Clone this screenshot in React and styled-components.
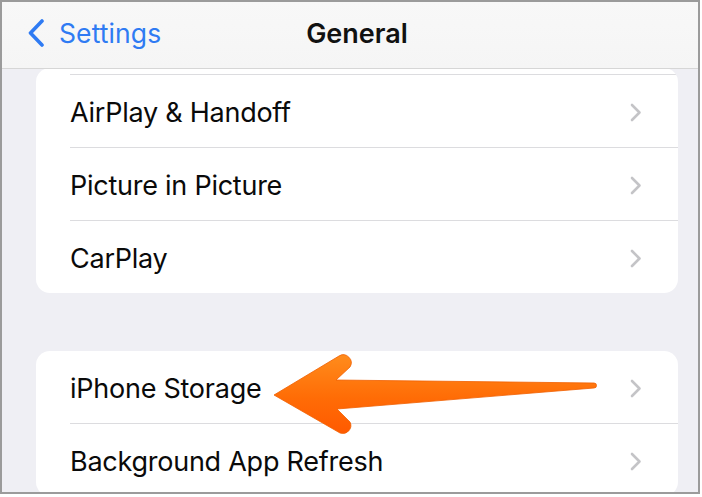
import React from 'react';
import styled, { createGlobalStyle } from 'styled-components';

const GlobalStyle = createGlobalStyle`
  html, body {
    margin: 0;
    padding: 0;
    background: #ffffff;
  }
  body {
    font-family: Inter, "Noto Sans", "Liberation Sans", sans-serif;
    -webkit-font-smoothing: antialiased;
  }
`;

const Frame = styled.div`
  position: relative;
  box-sizing: border-box;
  width: 700px;
  height: 494px;
  border: 2px solid #9b9b9b;
  background: #efeff4;
  overflow: hidden;
  display: flex;
  flex-direction: column;
`;

const NavBar = styled.header`
  position: relative;
  z-index: 2;
  flex: 0 0 auto;
  height: 67px;
  box-sizing: border-box;
  padding-bottom: 4px;
  display: grid;
  grid-template-columns: 1fr auto 1fr;
  align-items: center;
  background: linear-gradient(#f8f8f8, #f5f5f5);
  border-bottom: 1px solid #d6d6d6;
`;

const BackButton = styled.div`
  display: flex;
  align-items: center;
  gap: 14px;
  padding-left: 25px;
  color: #2f7bf3;
  font-size: 26.5px;
  letter-spacing: 0.1px;
`;

const Title = styled.h1`
  margin: 0 0 0 14px;
  font-size: 27px;
  font-weight: 600;
  color: #111;
`;

const Content = styled.main`
  flex: 1 1 auto;
  overflow: hidden;
  padding: 0 20px 0 34px;
`;

const Card = styled.section`
  margin-top: ${p => p.$offset || 0}px;
  background: #fff;
  border-radius: 14px;
  overflow: hidden;
`;

/* the bottom sliver of the row scrolled up under the nav bar */
const Peek = styled.div`
  height: 6px;
`;

const Row = styled.div`
  padding-left: 34px;
`;

const RowInner = styled.div`
  box-sizing: border-box;
  height: ${p => (p.$first ? 72 : 73)}px;
  padding: 3px 36px 0 0;
  display: flex;
  align-items: center;
  justify-content: space-between;
  border-top: ${p => (p.$first ? 'none' : '1px solid #dcdcdf')};
`;

const Label = styled.span`
  font-size: 27px;
  color: #0a0a0a;
  letter-spacing: -0.25px;
`;

const ArrowLayer = styled.svg`
  position: absolute;
  left: -2px;
  top: -2px;
  z-index: 3;
  pointer-events: none;
`;

const BackChevron = () => (
  <svg width="18" height="28" viewBox="0 0 18 28">
    <path d="M15 2 L3.5 14 L15 26" fill="none" stroke="#2f7bf3" strokeWidth="3.6" strokeLinecap="round" strokeLinejoin="round" />
  </svg>
);

const Chevron = () => (
  <svg width="12" height="19" viewBox="0 0 12 19">
    <path d="M2 2 L9.5 9.5 L2 17" fill="none" stroke="#c4c4c7" strokeWidth="2.6" strokeLinecap="round" strokeLinejoin="round" />
  </svg>
);

const SettingsRow = ({ label, first }) => (
  <Row>
    <RowInner $first={first}>
      <Label>{label}</Label>
      <Chevron />
    </RowInner>
  </Row>
);

export default function App() {
  return (
    <>
      <GlobalStyle />
      <Frame>
        <NavBar>
          <BackButton>
            <BackChevron />
            <span>Settings</span>
          </BackButton>
          <Title>General</Title>
          <div />
        </NavBar>
        <Content>
          <Card $offset={-1}>
            <Peek />
            <SettingsRow label="AirPlay & Handoff" />
            <SettingsRow label="Picture in Picture" />
            <SettingsRow label="CarPlay" />
          </Card>
          <Card $offset={58}>
            <SettingsRow label="iPhone Storage" first />
            <SettingsRow label="Background App Refresh" />
          </Card>
        </Content>
        <ArrowLayer width="700" height="494" viewBox="0 0 700 494">
          <defs>
            <linearGradient id="arrowFill" x1="0" y1="0" x2="0" y2="1">
              <stop offset="0" stopColor="#ff8c1c" />
              <stop offset="0.55" stopColor="#ff6c06" />
              <stop offset="1" stopColor="#ff5a00" />
            </linearGradient>
          </defs>
          <path
            d="M274 395 L339 356 A8 8 0 0 1 350 367 L336 380 L594 383 A2.5 2.5 0 0 1 594 388 L337 409 L350 422 A8 8 0 0 1 340 433 Z"
            fill="url(#arrowFill)"
            stroke="#f06000"
            strokeWidth="0.8"
            strokeLinejoin="round"
          />
        </ArrowLayer>
      </Frame>
    </>
  );
}
